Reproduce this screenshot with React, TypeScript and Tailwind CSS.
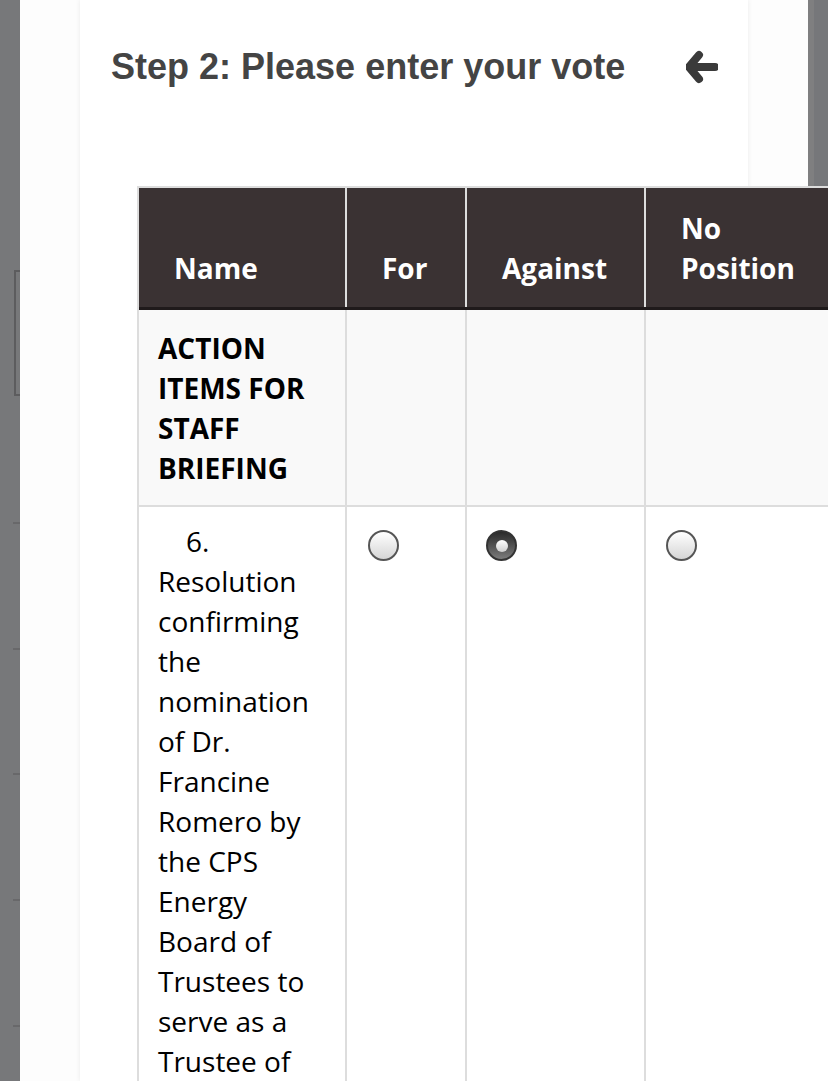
import React from 'react';

const sans = { fontFamily: '"Liberation Sans", Arial, sans-serif' };
const open = { fontFamily: '"Open Sans", "Noto Sans", sans-serif' };

function Radio({ checked }: { checked?: boolean }) {
  if (checked) {
    return (
      <div className="w-[31px] h-[31px] rounded-full border-2 border-[#333] bg-gradient-to-b from-[#2b2b2b] to-[#7c7c7c] flex items-center justify-center">
        <div className="w-[12px] h-[12px] rounded-full bg-gradient-to-b from-white to-[#cfcfcf]" />
      </div>
    );
  }
  return (
    <div className="w-[31px] h-[31px] rounded-full border-2 border-[#555] bg-gradient-to-b from-white to-[#d6d6d6]" />
  );
}

function BackArrow() {
  return (
    <svg width="32" height="34" viewBox="0 0 32 34" fill="none">
      <path
        d="M13 5 L3 17 L13 29 M3 17 H29"
        stroke="#3a3a3a"
        strokeWidth="8"
        strokeLinecap="round"
        strokeLinejoin="round"
      />
    </svg>
  );
}

const headCell =
  'bg-[#3a3233] text-white font-bold border-r-2 border-[#ddd] pl-[35px] pr-[20px] pt-[20px] pb-[19px] flex items-end';

export default function App() {
  return (
    <div className="w-[828px] h-[1081px] overflow-hidden flex bg-white relative" style={open}>
      {/* left gutter with what peeks out from the page below */}
      <div className="w-[20px] shrink-0 bg-[#77787a] relative">
        <div className="absolute left-[14px] top-[270px] w-[6px] h-[126px] border-l-2 border-t-2 border-b-2 border-[#5c5c5e]" />
        {[522, 648, 773, 899, 1025].map((y) => (
          <div key={y} className="absolute left-[13px] w-[7px] h-[2px] bg-[#68686a]" style={{ top: y }} />
        ))}
      </div>

      <div className="flex-1 min-w-0 bg-[#fdfdfd] pl-[60px]">
        <div className="w-[668px] h-full bg-white shadow-[0_0_5px_rgba(0,0,0,0.08)]">
          <div className="flex items-center justify-between pl-[31px] pr-[30px] pt-[47px]">
            <h2 className="text-[36px] leading-[40px] font-bold text-[#444]" style={sans}>
              Step 2: Please enter your vote
            </h2>
            <BackArrow />
          </div>

          <div className="relative z-10 mt-[99px] ml-[57px] w-[695px] border-l-2 border-t-2 border-[#ddd] text-[28px] leading-[40px]">
            <div className="grid grid-cols-[208px_120px_179px_186px] border-b-[3px] border-[#1f1a1b]">
              <div className={headCell}>Name</div>
              <div className={headCell}>For</div>
              <div className={headCell}>Against</div>
              <div className={headCell}>No Position</div>
            </div>

            <div className="grid grid-cols-[208px_120px_179px_186px] bg-[#f9f9f9] border-b-2 border-[#ddd]">
              <div className="border-r-2 border-[#ddd] pl-[19px] pr-[21px] pt-[18px] pb-[17px] font-bold text-black">
                ACTION ITEMS FOR STAFF BRIEFING
              </div>
              <div className="border-r-2 border-[#ddd]" />
              <div className="border-r-2 border-[#ddd]" />
              <div className="border-r-2 border-[#ddd]" />
            </div>

            <div className="grid grid-cols-[208px_120px_179px_186px] bg-white">
              <div className="border-r-2 border-[#ddd] pl-[19px] pr-[21px] pt-[14px] pb-[20px] text-black indent-[28px]">
                6. Resolution confirming the nomination of Dr. Francine Romero by the CPS Energy Board of Trustees to serve as a Trustee of the CPS Energy Board for a five-year term.
              </div>
              <div className="border-r-2 border-[#ddd] pl-[21px] pt-[23px]">
                <Radio />
              </div>
              <div className="border-r-2 border-[#ddd] pl-[19px] pt-[23px]">
                <Radio checked />
              </div>
              <div className="border-r-2 border-[#ddd] pl-[20px] pt-[23px]">
                <Radio />
              </div>
            </div>
          </div>
        </div>
      </div>

      <div className="w-[20px] shrink-0 flex">
        <div className="w-[6px] bg-[#7f7f80]" />
        <div className="flex-1 bg-[#76777a]" />
      </div>
    </div>
  );
}
